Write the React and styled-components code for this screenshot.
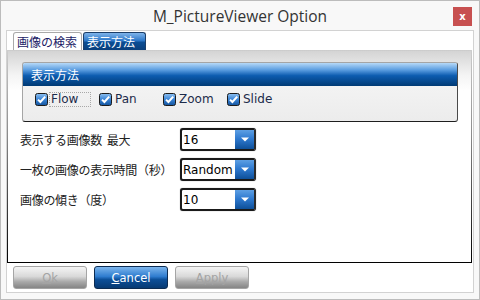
import React from "react";
import styled, { createGlobalStyle } from "styled-components";

const GlobalStyle = createGlobalStyle`
  html, body {
    margin: 0;
    padding: 0;
    background: #f8f8f8;
  }
  * {
    box-sizing: border-box;
  }
`;

const JP = `"Noto Sans CJK JP", "Noto Sans", sans-serif`;
const LATIN = `"DejaVu Sans", "Noto Sans CJK JP", sans-serif`;

const Window = styled.div`
  width: 480px;
  height: 300px;
  border: 1px solid #bcbcbc;
  background: #f8f8f8;
  display: flex;
  flex-direction: column;
`;

const TitleBar = styled.div`
  height: 29px;
  display: grid;
  grid-template-columns: 1fr auto 1fr;
  align-items: center;
`;

const Title = styled.div`
  grid-column: 2;
  font-family: "Open Sans", "Noto Sans", sans-serif;
  font-size: 15.5px;
  color: #333;
  margin-top: 1px;
`;

const CloseButton = styled.div`
  grid-column: 3;
  justify-self: end;
  margin-right: 7px;
  margin-top: 1px;
  width: 19px;
  height: 19px;
  background: #c75050;
  color: #fff;
  font-family: "DejaVu Sans", sans-serif;
  font-weight: bold;
  font-size: 10px;
  display: flex;
  align-items: center;
  justify-content: center;
`;

const Panel = styled.div`
  margin: 0 5px 6px 5px;
  height: 263px;
  border: 1px solid #d2d2d2;
  background: #ffffff;
  display: flex;
  flex-direction: column;
  padding: 1px 0 0 0;
`;

const TabStrip = styled.div`
  height: 18px;
  display: flex;
  padding-left: 6px;
`;

const Tab = styled.div`
  height: 18px;
  padding: 0 3px;
  display: flex;
  align-items: center;
  white-space: nowrap;
  font-family: ${JP};
  font-size: 12px;
  border-radius: 3px 3px 0 0;
  border: 1px solid ${(p) => (p.$active ? "#1c3f6a" : "#a9a9a9")};
  border-bottom: none;
  color: ${(p) => (p.$active ? "#ffffff" : "#1b1b66")};
  background: ${(p) =>
    p.$active
      ? "linear-gradient(#7fb4ea 0%, #2d77c8 45%, #0b4d94 55%, #0a3f7c 100%)"
      : "#ffffff"};
  width: ${(p) => p.$w}px;
  margin-left: ${(p) => (p.$active ? 1 : 0)}px;
`;

const TabContent = styled.div`
  height: 213px;
  margin-right: 1px;
  border: 1px solid;
  border-image: linear-gradient(#cdcdcd, #8a8a8a 40%, #000) 1;
  background: linear-gradient(#d4d4d4 0px, #f4f4f4 24px, #ffffff 40px);
  display: flex;
  flex-direction: column;
`;

const GroupBox = styled.div`
  margin: 11px 13px 0 14px;
  height: 60px;
  display: flex;
  flex-direction: column;
  border-radius: 3px;
  border: 1px solid #a5a5a5;
  border-bottom-color: #1e1e1e;
  border-right-color: #4a4a4a;
  background: linear-gradient(#f7f7f7, #ececec);
  overflow: hidden;
`;

const GroupHeader = styled.div`
  height: 23px;
  padding-left: 8px;
  display: flex;
  align-items: center;
  font-family: ${JP};
  font-size: 12px;
  color: #ffffff;
  background: linear-gradient(#b6d9f8 0%, #5b9de0 30%, #0d5cb0 55%, #003a74 100%);
`;

const CheckRow = styled.div`
  display: flex;
  padding: 6px 0 0 12px;
`;

const CheckItem = styled.label`
  width: 64px;
  display: flex;
  align-items: center;
  height: 15px;
`;

const CheckLabel = styled.span`
  font-family: ${LATIN};
  font-size: 12px;
  color: #1c2b4a;
  line-height: 13px;
  padding: 0 ${(p) => (p.$focus ? 12 : 2)}px 0 1px;
  margin-left: 1px;
  border: 1px dotted ${(p) => (p.$focus ? "#a8a8a8" : "transparent")};
`;

const Rows = styled.div`
  margin-top: 6px;
  padding-left: 12px;
  display: flex;
  flex-direction: column;
  gap: 7px;
`;

const Row = styled.div`
  display: grid;
  grid-template-columns: 160px 76px;
  align-items: center;
  height: 23px;
`;

const RowLabel = styled.div`
  font-family: ${JP};
  font-size: 12px;
  color: #222;
  letter-spacing: -0.3px;
  white-space: pre;
`;

const Select = styled.div`
  height: 23px;
  border: 2px solid #1a1a1a;
  border-right-color: #2b2b2b;
  border-radius: 3px;
  background: #ffffff;
  display: flex;
  align-items: stretch;
  box-shadow: 0 0 1px #777;
`;

const SelectValue = styled.div`
  flex: 1;
  display: flex;
  align-items: center;
  padding-left: 1px;
  font-family: ${LATIN};
  font-size: 12px;
  color: #000;
  overflow: hidden;
`;

const SelectArrow = styled.div`
  width: 19px;
  display: flex;
  align-items: center;
  justify-content: center;
  background: linear-gradient(#5d9fe3 0%, #2f7ad0 45%, #0d4f99 100%);
`;

const ButtonRow = styled.div`
  display: flex;
  gap: 7px;
  padding: 3px 0 0 6px;
`;

const Button = styled.div`
  width: 74px;
  height: 23px;
  border-radius: 3px;
  display: flex;
  align-items: center;
  justify-content: center;
  font-family: ${LATIN};
  font-size: 11.5px;
  border: 1px solid ${(p) => (p.$primary ? "#0d2c52" : "#a5a5a5")};
  color: ${(p) => (p.$primary ? "#ffffff" : "#a3a3a3")};
  background: ${(p) =>
    p.$primary
      ? "linear-gradient(#7cb5ec 0%, #2f7ccf 45%, #0c4f98 60%, #073a73 100%)"
      : "linear-gradient(#f5f5f5 0%, #d9d9d9 45%, #a9a9a9 70%, #858585 100%)"};
  u {
    text-decoration: underline;
  }
`;

const CheckBox = () => (
  <svg width="13" height="13" viewBox="0 0 13 13">
    <defs>
      <linearGradient id="cbg" x1="0" y1="0" x2="0" y2="1">
        <stop offset="0" stopColor="#8ec0f0" />
        <stop offset="0.5" stopColor="#3a84d6" />
        <stop offset="1" stopColor="#13539c" />
      </linearGradient>
    </defs>
    <rect x="0.5" y="0.5" width="12" height="12" rx="2" fill="url(#cbg)" stroke="#1c1c1c" />
    <path d="M3 6.6 L5.4 9 L10.2 3.6" fill="none" stroke="#ffffff" strokeWidth="2" />
  </svg>
);

const Arrow = () => (
  <svg width="8" height="5" viewBox="0 0 8 5">
    <polygon points="0,0.5 8,0.5 4,4.5" fill="#ffffff" />
  </svg>
);

const modes = [
  { name: "Flow", focus: true },
  { name: "Pan" },
  { name: "Zoom" },
  { name: "Slide" },
];

const settings = [
  { label: "表示する画像数  最大", value: "16" },
  { label: "一枚の画像の表示時間（秒）", value: "Random" },
  { label: "画像の傾き（度）", value: "10" },
];

export default function App() {
  return (
    <>
      <GlobalStyle />
      <Window>
        <TitleBar>
          <Title>M_PictureViewer Option</Title>
          <CloseButton>x</CloseButton>
        </TitleBar>
        <Panel>
          <TabStrip>
            <Tab $w={69}>画像の検索</Tab>
            <Tab $active $w={63}>表示方法</Tab>
          </TabStrip>
          <TabContent>
            <GroupBox>
              <GroupHeader>表示方法</GroupHeader>
              <CheckRow>
                {modes.map((m) => (
                  <CheckItem key={m.name}>
                    <CheckBox />
                    <CheckLabel $focus={m.focus}>{m.name}</CheckLabel>
                  </CheckItem>
                ))}
              </CheckRow>
            </GroupBox>
            <Rows>
              {settings.map((s) => (
                <Row key={s.label}>
                  <RowLabel>{s.label}</RowLabel>
                  <Select>
                    <SelectValue>{s.value}</SelectValue>
                    <SelectArrow>
                      <Arrow />
                    </SelectArrow>
                  </Select>
                </Row>
              ))}
            </Rows>
          </TabContent>
          <ButtonRow>
            <Button>
              <u>O</u>k
            </Button>
            <Button $primary>
              <u>C</u>ancel
            </Button>
            <Button>
              <u>A</u>pply
            </Button>
          </ButtonRow>
        </Panel>
      </Window>
    </>
  );
}
